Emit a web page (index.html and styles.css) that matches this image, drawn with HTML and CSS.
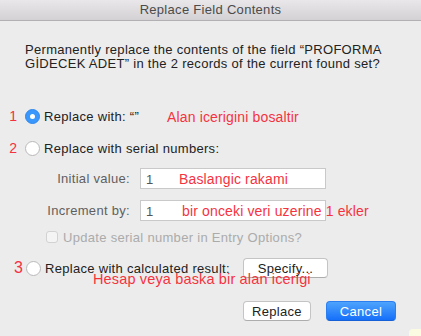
FILE: index.html
```html
<!DOCTYPE html>
<html lang="en">
<head>
    <meta charset="UTF-8">
    <meta name="viewport" content="width=device-width, initial-scale=1.0">
    <title>Replace Field Contents</title>
    <link rel="stylesheet" href="styles.css">
</head>
<body>
    <div class="window">
        <div class="titlebar">Replace Field Contents</div>

        <div class="content">
            <p class="message">Permanently replace the contents of the field “PROFORMA GİDECEK ADET” in the 2 records of the current found set?</p>

            <div class="option opt-empty">
                <span class="mark">1</span>
                <span class="radio checked"></span>
                <span class="label">Replace with: “”</span>
                <span class="note note-empty">Alan icerigini bosaltir</span>
            </div>

            <div class="option opt-serial">
                <span class="mark">2</span>
                <span class="radio"></span>
                <span class="label">Replace with serial numbers:</span>
            </div>

            <div class="serial">
                <span class="field-label">Initial value:</span>
                <div class="field">1<span class="note note-initial">Baslangic rakami</span></div>
                <span class="field-label">Increment by:</span>
                <div class="field">1<span class="note note-increment">bir onceki veri uzerine 1 ekler</span></div>
            </div>

            <div class="check-row">
                <span class="checkbox"></span>
                <span>Update serial number in Entry Options?</span>
            </div>

            <div class="option opt-calc">
                <span class="mark mark-big">3</span>
                <span class="radio"></span>
                <span class="label">Replace with calculated result:</span>
                <button class="btn btn-specify">Specify...</button>
                <span class="note note-calc">Hesap veya baska bir alan icerigi</span>
            </div>

            <div class="actions">
                <button class="btn">Replace</button>
                <button class="btn btn-primary">Cancel</button>
            </div>
        </div>
        <div class="corner"></div>
    </div>
</body>
</html>
```

FILE: styles.css
```css
* {margin: 0; padding: 0; box-sizing: border-box;}
body {
    font-family: "Liberation Sans", Arial, sans-serif;
    font-size: 13px;
    letter-spacing: 0.3px;
    color: #222;
    background: #ececec;
    width: 421px;
    height: 336px;
    overflow: hidden;
}
.window {position: relative; height: 336px;}
.titlebar {
    height: 21px;
    line-height: 20px;
    text-align: center;
    color: #4b4b4b;
    background: linear-gradient(#e9e7e9, #d3d1d3);
    border-bottom: 1px solid #b2b0b2;
}
.content {padding: 0 25px 0 0;}
.message {
    margin: 22px 0 0 25px;
    line-height: 14px;
    width: 385px;
}
.option {
    display: flex;
    align-items: center;
    height: 16px;
    position: relative;
}
.opt-empty {margin-top: 37px;}
.opt-serial {margin-top: 16px;}
.opt-calc {margin-top: 13px; height: 20px;}
.mark {
    width: 25px;
    padding-right: 8px;
    text-align: right;
    color: #f5313f;
    font-size: 14px;
    letter-spacing: 0;
}
.mark-big {font-size: 16px; width: 26px; padding-right: 3px;}
.radio {
    width: 15px;
    height: 15px;
    border-radius: 50%;
    background: #fff;
    border: 1px solid #b9b9b9;
    flex: none;
    margin-right: 4px;
}
.radio.checked {
    background: #3a97fc;
    border-color: #2f87ef;
    display: flex;
    align-items: center;
    justify-content: center;
}
.radio.checked::after {
    content: "";
    width: 5px;
    height: 5px;
    border-radius: 50%;
    background: #fff;
}
.note {
    color: #f5333f;
    font-size: 14px;
    letter-spacing: 0.15px;
    white-space: nowrap;
}
.note-empty {position: absolute; left: 167px; top: 1px;}
.serial {
    display: grid;
    grid-template-columns: 130px 186px;
    column-gap: 10px;
    row-gap: 11px;
    align-items: center;
    margin-top: 12px;
}
.field-label {text-align: right; color: #5f5f5f;}
.field {
    position: relative;
    height: 21px;
    line-height: 21px;
    padding-left: 5px;
    background: #fff;
    border: 1px solid #c9c9c9;
    color: #555;
}
.field .note {position: absolute; top: 0;}
.note-initial {left: 38px;}
.note-increment {left: 41px; top: 1px;}
.check-row {
    display: flex;
    align-items: center;
    gap: 5px;
    height: 16px;
    margin: 8px 0 0 46px;
    color: #ababab;
}
.checkbox {
    width: 12px;
    height: 12px;
    border: 1px solid #d2d2d2;
    border-radius: 3px;
    background: #f4f4f4;
}
.btn {
    font-family: inherit;
    font-size: 13px;
    letter-spacing: 0.3px;
    height: 20px;
    background: #fff;
    color: #222;
    border: 1px solid #c4c4c4;
    border-bottom-color: #adadad;
    border-radius: 4px;
}
.btn-specify {width: 85px; position: absolute; left: 243px; top: 0;}
.note-calc {position: absolute; left: 93px; top: 13px; font-size: 14.5px;}
.actions {
    display: flex;
    justify-content: flex-end;
    gap: 15px;
    margin-top: 23px;
}
.actions .btn {width: 68px;}
.actions .btn-primary {
    width: 70px;
    color: #fff;
    background: linear-gradient(#4ea4fc, #1670f9);
    border-color: #2a7ef0;
    border-bottom-color: #1560d6;
}
.corner {
    position: absolute;
    right: 0;
    bottom: 0;
    width: 12px;
    height: 7px;
    background: #fbfbe2;
    border-top-left-radius: 4px;
}
```
